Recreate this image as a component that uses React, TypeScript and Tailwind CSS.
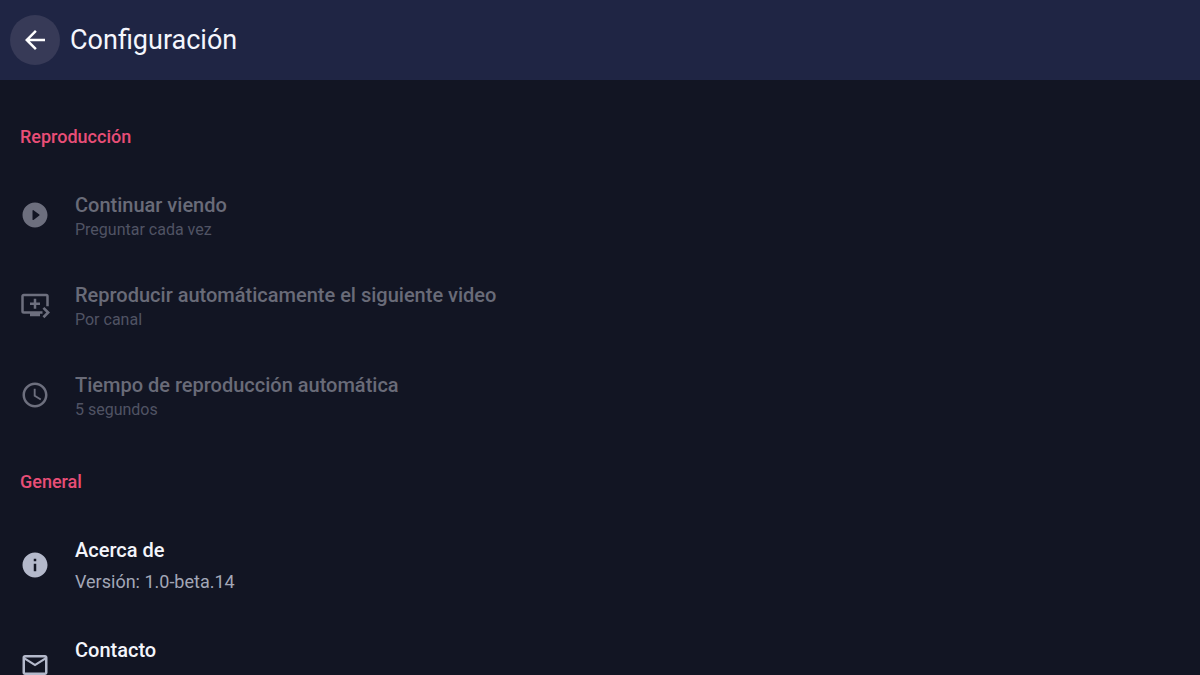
import type { ReactNode } from "react";
import clsx from "clsx";
import { MdArrowBack, MdInfo, MdMailOutline, MdQueuePlayNext, MdSchedule } from "react-icons/md";

interface SettingRowProps {
  icon: ReactNode;
  title: string;
  summary?: string;
  disabled?: boolean;
}

// play circle with rounded triangle //
function PlayCircleIcon() {
  return (
    <svg viewBox="0 0 24 24" fill="currentColor" aria-hidden="true">
      <path d="M12 2C6.48 2 2 6.48 2 12s4.48 10 10 10 10-4.48 10-10S17.52 2 12 2zm-2 13.5v-7c0-.41.47-.65.8-.4l4.67 3.5c.27.2.27.6 0 .8l-4.67 3.5c-.33.25-.8.01-.8-.4z" />
    </svg>
  );
}

function SettingRow({ icon, title, summary, disabled = false }: SettingRowProps) {
  return (
    <button
      type="button"
      disabled={disabled}
      className={clsx(
        "flex w-full items-start gap-[25px] px-5 text-left",
        disabled ? "min-h-[90px]" : "min-h-[100px]"
      )}
    >
      <span
        className={clsx(
          "size-[30px] shrink-0 [&>svg]:size-full",
          disabled ? "mt-[30px] text-[#6d6f7e]" : "mt-[35px] text-[#b4b9cb]"
        )}
      >
        {icon}
      </span>
      <span className={clsx("flex min-w-0 flex-col", disabled ? "pt-[23px]" : "pt-[19px]")}>
        <span
          className={clsx(
            "text-[20px] font-medium",
            disabled ? "leading-[24px] text-[#696b78]" : "leading-[32px] text-[#f4f5fb]"
          )}
        >
          {title}
        </span>
        {summary && (
          <span
            className={clsx(
              disabled ? "text-[16px] leading-[26px] text-[#505363]" : "text-[18px] leading-[32px] text-[#a3a7b7]"
            )}
          >
            {summary}
          </span>
        )}
      </span>
    </button>
  );
}

function Section({ title, children }: { title: string; children: ReactNode }) {
  return (
    <section>
      <h2 className="px-5 pt-8 pb-[23px] text-[18px] leading-5 font-medium text-[#e94e77]">{title}</h2>
      {children}
    </section>
  );
}

function App() {
  return (
    <div className="flex h-screen flex-col bg-[#121523] font-['Roboto','Liberation_Sans',sans-serif]">
      {/* top bar */}
      <header className="flex h-20 shrink-0 items-center gap-[10px] bg-[#1f2544] px-[10px]">
        <button
          type="button"
          aria-label="Atrás"
          className="flex size-[50px] items-center justify-center rounded-full bg-[#373a57] text-white"
        >
          <MdArrowBack size={30} />
        </button>
        <h1 className="text-[27px] leading-8 text-[#f4f6fd]">Configuración</h1>
      </header>

      {/* settings list */}
      <main className="min-h-0 flex-1 overflow-y-auto pt-[15px] [scrollbar-width:none]">
        <Section title="Reproducción">
          <SettingRow disabled icon={<PlayCircleIcon />} title="Continuar viendo" summary="Preguntar cada vez" />
          <SettingRow
            disabled
            icon={<MdQueuePlayNext />}
            title="Reproducir automáticamente el siguiente video"
            summary="Por canal"
          />
          <SettingRow disabled icon={<MdSchedule />} title="Tiempo de reproducción automática" summary="5 segundos" />
        </Section>

        <Section title="General">
          <SettingRow icon={<MdInfo />} title="Acerca de" summary="Versión: 1.0-beta.14" />
          <SettingRow icon={<MdMailOutline />} title="Contacto" />
        </Section>
      </main>
    </div>
  );
}

export default App;
